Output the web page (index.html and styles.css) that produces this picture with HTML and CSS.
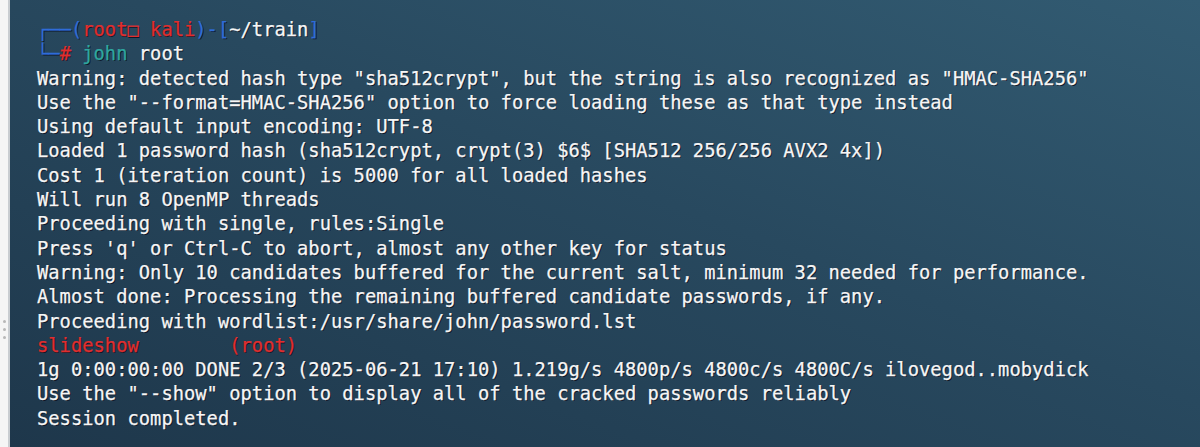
FILE: index.html
```html
<!DOCTYPE html>
<html>
<head>
<meta charset="utf-8">
<link rel="stylesheet" href="styles.css">
</head>
<body>
<div class="page">
  <div class="gutter">
    <div class="grip"><span></span><span></span><span></span></div>
  </div>
  <div class="terminal">
<pre class="out"><span class="b">┌──(</span><span class="r">root□ kali</span><span class="b">)-[</span><span class="w">~/train</span><span class="b">]</span>
<span class="b">└─</span><span class="r">#</span> <span class="c">john</span> root
Warning: detected hash type "sha512crypt", but the string is also recognized as "HMAC-SHA256"
Use the "--format=HMAC-SHA256" option to force loading these as that type instead
Using default input encoding: UTF-8
Loaded 1 password hash (sha512crypt, crypt(3) $6$ [SHA512 256/256 AVX2 4x])
Cost 1 (iteration count) is 5000 for all loaded hashes
Will run 8 OpenMP threads
Proceeding with single, rules:Single
Press 'q' or Ctrl-C to abort, almost any other key for status
Warning: Only 10 candidates buffered for the current salt, minimum 32 needed for performance.
Almost done: Processing the remaining buffered candidate passwords, if any.
Proceeding with wordlist:/usr/share/john/password.lst
<span class="r">slideshow</span>        <span class="r">(root)</span>
1g 0:00:00:00 DONE 2/3 (2025-06-21 17:10) 1.219g/s 4800p/s 4800c/s 4800C/s ilovegod..mobydick
Use the "--show" option to display all of the cracked passwords reliably
Session completed.</pre>
  </div>
</div>
</body>
</html>
```

FILE: styles.css
```css
html, body {
  margin: 0;
  padding: 0;
  width: 1200px;
  height: 447px;
  overflow: hidden;
  background: #ffffff;
}
.page {
  display: flex;
  width: 1200px;
  height: 447px;
}
.gutter {
  width: 10px;
  flex: 0 0 10px;
  background: #f5f5f5;
  border-right: 2px solid #c9cdd1;
  display: flex;
  align-items: center;
  justify-content: center;
  padding-top: 212px;
  box-sizing: border-box;
}
.grip {
  display: flex;
  flex-direction: column;
  gap: 5px;
}
.grip span {
  display: block;
  width: 3px;
  height: 3px;
  border-radius: 50%;
  background: #b8b8b8;
}
.terminal {
  flex: 1;
  background: linear-gradient(to bottom left, #325b72 0%, #28495f 45%, #1e374b 100%);
  padding: 18px 0 0 27px;
  box-sizing: border-box;
}
.out {
  margin: 0;
  font-family: "DejaVu Sans Mono", "Liberation Mono", monospace;
  font-size: 18.8px;
  line-height: 24.3px;
  color: #f6f6f6;
  -webkit-text-stroke: 0.25px currentColor;
  text-shadow: 1px 1px 0 rgba(10, 15, 30, 0.85);
  white-space: pre;
}
.b { color: #2f6cd8; }
.r { color: #e12e2e; }
.c { color: #2ea7a0; }
.w { color: #f6f6f6; }
```
